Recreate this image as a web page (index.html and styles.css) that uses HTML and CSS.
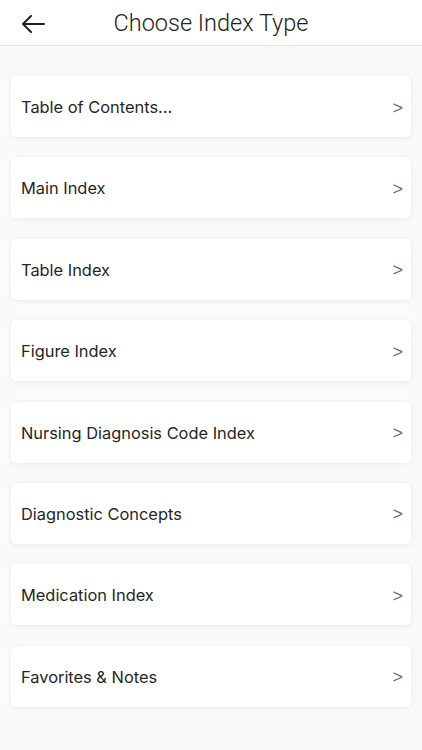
FILE: index.html
```html
<!DOCTYPE html>
<html>
<head>
<meta charset="utf-8">
<link rel="stylesheet" href="styles.css">
</head>
<body>
<header class="topbar">
  <button class="back" aria-label="Back">
    <svg width="24" height="18" viewBox="0 0 24 18"><path d="M23 9H2M10 1L2 9l8 8" fill="none" stroke="#222" stroke-width="2" stroke-linecap="round" stroke-linejoin="round"/></svg>
  </button>
  <h1 class="title">Choose Index Type</h1>
</header>
<main class="list">
  <div class="card"><span class="label">Table of Contents...</span><span class="chev">&gt;</span></div>
  <div class="card"><span class="label">Main Index</span><span class="chev">&gt;</span></div>
  <div class="card"><span class="label">Table Index</span><span class="chev">&gt;</span></div>
  <div class="card"><span class="label">Figure Index</span><span class="chev">&gt;</span></div>
  <div class="card"><span class="label">Nursing Diagnosis Code Index</span><span class="chev">&gt;</span></div>
  <div class="card"><span class="label">Diagnostic Concepts</span><span class="chev">&gt;</span></div>
  <div class="card"><span class="label">Medication Index</span><span class="chev">&gt;</span></div>
  <div class="card"><span class="label">Favorites &amp; Notes</span><span class="chev">&gt;</span></div>
</main>
</body>
</html>
```
FILE: styles.css
```css
* { box-sizing: border-box; }
html, body { margin: 0; padding: 0; }
body {
  width: 422px;
  height: 750px;
  background: #f9fafc;
  font-family: Inter, "Liberation Sans", Arial, sans-serif;
  color: #222;
  overflow: hidden;
}
.topbar {
  height: 46px;
  background: #fff;
  border-bottom: 1px solid #e2e2e4;
  display: flex;
  align-items: center;
  justify-content: center;
  position: relative;
}
.back {
  position: absolute;
  left: 21px;
  top: 15px;
  padding: 0;
  border: 0;
  background: none;
  display: flex;
}
.title {
  margin: 1px 0 0 0;
  font-family: Roboto, sans-serif;
  font-weight: 300;
  font-size: 23.5px;
  color: #222;
  letter-spacing: 0;
}
.list {
  padding: 30px 11px 0 11px;
  display: flex;
  flex-direction: column;
  gap: 20.4px;
}
.card {
  height: 61px;
  width: 400px;
  background: #fff;
  border-radius: 5px;
  box-shadow: 0 1px 6px rgba(0,0,0,0.07);
  display: flex;
  align-items: center;
  justify-content: space-between;
  padding: 1px 8px 0 10px;
}
.label {
  font-size: 16.4px;
  color: #262626;
}
.chev {
  font-size: 18px;
  color: #6e6e6e;
  font-family: "Liberation Sans", Arial, sans-serif;
  margin-top: 2px;
}
```
